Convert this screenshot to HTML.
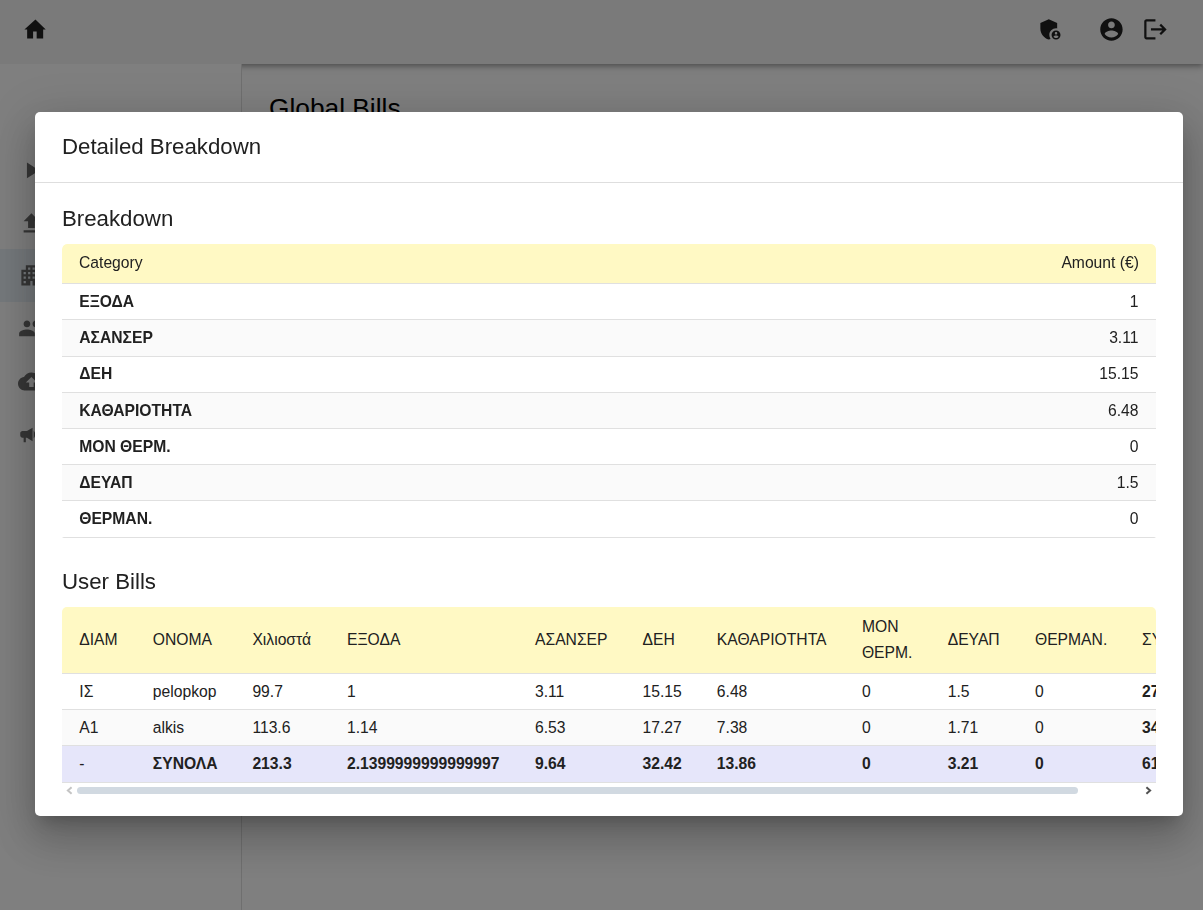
<!DOCTYPE html>
<html>
<head>
<meta charset="utf-8">
<title>Global Bills</title>
<style>
*{box-sizing:border-box}
html,body{margin:0;padding:0}
body{width:1203px;height:910px;overflow:hidden;position:relative;background:#fff;font-family:"Liberation Sans",sans-serif;color:#212121}
.toolbar{position:absolute;left:0;top:0;width:1203px;height:64px;background:#f5f5f5;box-shadow:0 2px 4px -1px rgba(0,0,0,.2),0 4px 5px 0 rgba(0,0,0,.14),0 1px 10px 0 rgba(0,0,0,.12);z-index:1}
.sidenav{position:absolute;left:0;top:64px;width:242px;height:846px;background:#fff;border-right:1px solid #dedede;z-index:2}
.content{position:absolute;left:242px;top:64px;right:0;bottom:0;background:#fefefe}
.content h1{position:absolute;left:27px;top:29px;margin:0;font-weight:400;font-size:26.3px;line-height:30px;color:#000;white-space:nowrap}
.active{position:absolute;left:0;top:185px;width:241px;height:53px;background:#ebf3f8}
.ico{position:absolute;fill:#202020;width:26.88px;height:26.88px}
.side .ico{fill:#6e6e6e;left:17.9px}
.mask{position:absolute;left:0;top:0;width:1203px;height:910px;background:rgba(0,0,0,.5);z-index:5}
.dialog{position:absolute;left:35px;top:112px;width:1148px;height:704px;background:#fff;border-radius:5px;z-index:6;box-shadow:0 11px 15px -7px rgba(0,0,0,.2),0 24px 38px 3px rgba(0,0,0,.14),0 9px 46px 8px rgba(0,0,0,.12)}
.dtitle,.h2,.wrap1{will-change:transform}
.wrap1{position:absolute;left:27px;top:132px;width:1094px;height:294px;overflow:hidden;border-radius:5px 5px 2px 2px}
.dtitle{position:absolute;left:26.5px;top:21.8px;font-size:22.25px;line-height:26px;color:#212121;white-space:nowrap}
.dline{position:absolute;left:0;top:70px;width:1148px;height:1px;background:#dedede}
.h2{position:absolute;left:26.5px;font-size:22.25px;line-height:26px;color:#212121;white-space:nowrap}
table{border-collapse:separate;border-spacing:0;font-size:15.68px;color:#212121}
th{background:#fff9c4;font-weight:400;text-align:left;border-bottom:1px solid #e0e0e0}
td{border-bottom:1px solid #e0e0e0}
.t1{width:1094px}
.t1 th{height:40px;padding:0 17.1px 1px 17px}
.t1 th:first-child{border-top-left-radius:5px}
.t1 th:last-child{border-top-right-radius:5px;text-align:right}
.t1 td{height:36px;padding:0 17.5px 0 17.2px;font-weight:700}
.t1 tr:nth-child(2) td,.t1 tr:nth-child(7) td{height:37px}
.t1 tr:nth-child(1) td,.t1 tr:nth-child(2) td{padding-top:.8px}
.t1 tr:nth-child(3) td{padding-bottom:.8px}
.t1 td:last-child{text-align:right;font-weight:400}
.t1 tr:nth-child(even) td{background:#fafafa}
.wrap2{position:absolute;left:27px;top:495px;width:1094px;height:176px;overflow:hidden;border-radius:5px 5px 0 0}
.t2{table-layout:fixed;width:1163px}
.t2 th{height:67px;padding:0 0 .4px 16.8px;line-height:26.2px;vertical-align:middle}
.t2 th:nth-child(8){padding:.7px 0 0 16.8px}
.t2 td{height:36px;padding:0 0 0 16.8px;white-space:nowrap}
.t2 tr:nth-child(even) td{background:#fafafa}
.t2 td:last-child{font-weight:700}
.t2 tr.tot td{background:#e6e6fa;font-weight:700;height:37px}
.t2 th:first-child,.t2 td:first-child{padding-left:17.3px}
.t2 tr.tot td:first-child{font-weight:400}
.sb{position:absolute;left:27px;top:671px;width:1094px;height:15px}
.thumb{position:absolute;left:15px;top:4px;width:1001px;height:7px;border-radius:3.5px;background:#d1d9e1}
</style>
</head>
<body>
<div class="toolbar">
  <svg class="ico" style="left:21.7px;top:15.5px" viewBox="0 0 24 24"><path d="M9.9 20.1v-6.200h3.2v6.200h5.8v-8h2.3L12 3.2 2.150 12.1h2.450v8z"/></svg>
  <svg class="ico" style="left:1036.9px;top:15.8px" viewBox="0 0 24 24"><path d="M17 11c.34 0 .67.04 1 .09V6.27L10.5 3 3 6.27v4.91c0 4.54 3.2 8.79 7.5 9.82.55-.13 1.08-.32 1.6-.55-.69-.98-1.1-2.17-1.1-3.45 0-3.31 2.69-6 6-6z"/><path d="M17 13c-2.21 0-4 1.79-4 4s1.79 4 4 4 4-1.79 4-4-1.790-4-4-4zm0 1.380c.62 0 1.12.51 1.12 1.12s-.51 1.12-1.12 1.12-1.120-.51-1.120-1.120.5-1.120 1.120-1.120zm0 5.370c-.93 0-1.740-.46-2.240-1.170.05-.72 1.510-1.080 2.240-1.080s2.190.36 2.240 1.080c-.5.71-1.310 1.170-2.240 1.170z"/></svg>
  <svg class="ico" style="left:1097.5px;top:15.9px" viewBox="0 0 24 24"><path d="M12 2C6.48 2 2 6.48 2 12s4.480 10 10 10 10-4.480 10-10S17.520 2 12 2zm0 3c1.660 0 3 1.340 3 3s-1.340 3-3 3-3-1.340-3-3 1.340-3 3-3zm0 14.200c-2.500 0-4.710-1.280-6-3.220.03-1.990 4-3.080 6-3.080 1.990 0 5.970 1.090 6 3.080-1.290 1.940-3.500 3.220-6 3.220z"/></svg>
  <svg class="ico" style="left:1141.5px;top:16.1px" viewBox="0 0 24 24"><path d="M17 7l-1.410 1.410L18.170 11H8v2h10.170l-2.580 2.580L17 17l5-5zM4 5h8V3H4c-1.100 0-2 .9-2 2v14c0 1.100.9 2 2 2h8v-2H4V5z"/></svg>
</div>
<div class="content"><h1>Global Bills</h1></div>
<div class="sidenav side">
  <div class="active"></div>
  <svg class="ico" style="top:92.6px" viewBox="0 0 24 24"><path d="M8 5v14l11-7z"/></svg>
  <svg class="ico" style="top:145.5px" viewBox="0 0 24 24"><path d="M5 20h14v-2H5v2zm0-10h4v6h6v-6h4l-7-7-7 7z"/></svg>
  <svg class="ico" style="top:198.4px" viewBox="0 0 24 24"><path d="M17 11V3H7v4H3v14h8v-4h2v4h8V11h-4zM7 19H5v-2h2v2zm0-4H5v-2h2v2zm0-4H5V9h2v2zm4 4H9v-2h2v2zm0-4H9V9h2v2zm0-4H9V5h2v2zm4 8h-2v-2h2v2zm0-4h-2V9h2v2zm0-4h-2V5h2v2zm4 12h-2v-2h2v2zm0-4h-2v-2h2v2z"/></svg>
  <svg class="ico" style="top:251.3px" viewBox="0 0 24 24"><path d="M16 11c1.660 0 2.990-1.340 2.990-3S17.660 5 16 5c-1.660 0-3 1.340-3 3s1.340 3 3 3zm-8 0c1.660 0 2.990-1.340 2.990-3S9.660 5 8 5C6.340 5 5 6.340 5 8s1.340 3 3 3zm0 2c-2.330 0-7 1.170-7 3.500V19h14v-2.500c0-2.330-4.670-3.500-7-3.500zm8 0c-.29 0-.62.02-.97.05 1.160.84 1.970 1.970 1.970 3.450V19h6v-2.500c0-2.330-4.670-3.500-7-3.500z"/></svg>
  <svg class="ico" style="top:304.2px" viewBox="0 0 24 24"><path d="M19.350 10.040C18.670 6.590 15.640 4 12 4 9.110 4 6.600 5.640 5.350 8.040 2.340 8.360 0 10.910 0 14c0 3.310 2.690 6 6 6h13c2.760 0 5-2.240 5-5 0-2.640-2.050-4.780-4.650-4.960zM14 13v4h-4v-4H7l5-5 5 5h-3z"/></svg>
  <svg class="ico" style="top:357.1px" viewBox="0 0 24 24"><path d="M18 11v2h4v-2h-4zm-2 6.610c.96.71 2.210 1.650 3.200 2.390.4-.53.8-1.070 1.200-1.600-.99-.74-2.240-1.680-3.200-2.400-.4.540-.8 1.080-1.200 1.610zM20.400 5.600c-.4-.53-.8-1.070-1.200-1.600-.99.74-2.240 1.680-3.200 2.400.4.530.8 1.070 1.200 1.600.96-.72 2.210-1.650 3.200-2.400zM4 9c-1.100 0-2 .9-2 2v2c0 1.100.9 2 2 2h1v4h2v-4h1l5 3V6L8 9H4zm11.500 3c0-1.330-.58-2.530-1.500-3.350v6.690c.92-.81 1.500-2.010 1.500-3.340z"/></svg>
</div>
<div class="mask"></div>
<div class="dialog">
  <div class="dtitle">Detailed Breakdown</div>
  <div class="dline"></div>
  <div class="h2" style="top:93.8px">Breakdown</div>
  <div class="wrap1"><table class="t1">
    <thead><tr><th>Category</th><th>Amount (€)</th></tr></thead>
    <tbody>
      <tr><td>ΕΞΟΔΑ</td><td>1</td></tr>
      <tr><td>ΑΣΑΝΣΕΡ</td><td>3.11</td></tr>
      <tr><td>ΔΕΗ</td><td>15.15</td></tr>
      <tr><td>ΚΑΘΑΡΙΟΤΗΤΑ</td><td>6.48</td></tr>
      <tr><td>ΜΟΝ ΘΕΡΜ.</td><td>0</td></tr>
      <tr><td>ΔΕΥΑΠ</td><td>1.5</td></tr>
      <tr><td>ΘΕΡΜΑΝ.</td><td>0</td></tr>
    </tbody>
  </table></div>
  <div class="h2" style="top:456.8px">User Bills</div>
  <div class="wrap2">
  <table class="t2">
    <colgroup><col style="width:74px"><col style="width:99.6px"><col style="width:94.55px"><col style="width:188.05px"><col style="width:107.5px"><col style="width:74.35px"><col style="width:145.1px"><col style="width:85.75px"><col style="width:87.3px"><col style="width:107.1px"><col></colgroup>
    <thead><tr><th>ΔΙΑΜ</th><th>ΟΝΟΜΑ</th><th>Χιλιοστά</th><th>ΕΞΟΔΑ</th><th>ΑΣΑΝΣΕΡ</th><th>ΔΕΗ</th><th>ΚΑΘΑΡΙΟΤΗΤΑ</th><th>ΜΟΝ<br>ΘΕΡΜ.</th><th>ΔΕΥΑΠ</th><th>ΘΕΡΜΑΝ.</th><th>ΣΥΝΟΛΟ</th></tr></thead>
    <tbody>
      <tr><td>ΙΣ</td><td>pelopkop</td><td>99.7</td><td>1</td><td>3.11</td><td>15.15</td><td>6.48</td><td>0</td><td>1.5</td><td>0</td><td>27.24</td></tr>
      <tr><td>Α1</td><td>alkis</td><td>113.6</td><td>1.14</td><td>6.53</td><td>17.27</td><td>7.38</td><td>0</td><td>1.71</td><td>0</td><td>34.03</td></tr>
      <tr class="tot"><td>-</td><td>ΣΥΝΟΛΑ</td><td>213.3</td><td>2.1399999999999997</td><td>9.64</td><td>32.42</td><td>13.86</td><td>0</td><td>3.21</td><td>0</td><td>61.27</td></tr>
    </tbody>
  </table>
  </div>
  <div class="sb">
    <svg style="position:absolute;left:3px;top:2px" width="9" height="11" viewBox="0 0 9 11"><path d="M6.600 2.300L2.900 5.500 6.600 8.700" fill="none" stroke="#c4c4c4" stroke-width="2"/></svg>
    <div class="thumb"></div>
    <svg style="position:absolute;left:1082px;top:2px" width="9" height="11" viewBox="0 0 9 11"><path d="M2.400 2.300L6.100 5.500 2.400 8.700" fill="none" stroke="#505050" stroke-width="2"/></svg>
  </div>
</div>
</body>
</html>
